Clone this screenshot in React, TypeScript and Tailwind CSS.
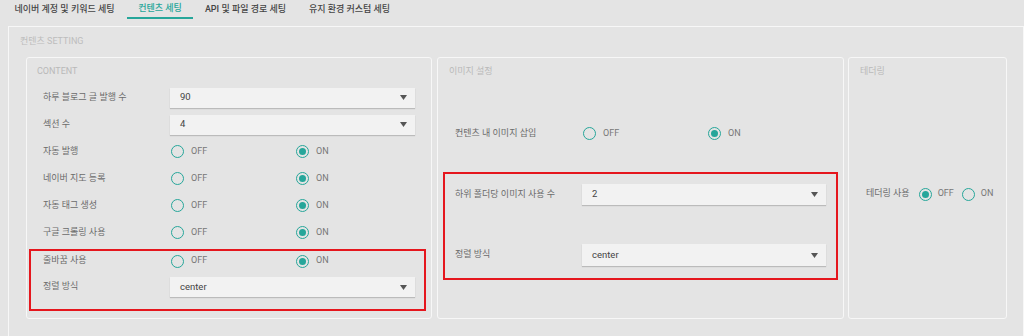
import React from 'react';

const tabs = [
  { label: '네이버 계정 및 키워드 세팅', width: 'w-[125px]' },
  { label: '컨텐츠 세팅', width: 'w-[66px]', active: true },
  { label: 'API 및 파일 경로 세팅', width: 'w-[105px]' },
  { label: '유지 환경 커스텀 세팅', width: 'w-[103px]' },
];

const Radio = ({ checked }: { checked?: boolean }) => (
  <span className="w-[13px] h-[13px] rounded-full border-[1.5px] border-[#26a69a] flex items-center justify-center shrink-0">
    {checked && <span className="w-[7px] h-[7px] rounded-full bg-[#26a69a]" />}
  </span>
);

const Select = ({ value, height = 'h-[20px]' }: { value: string; height?: string }) => (
  <div
    className={`flex-1 ${height} bg-[#f2f2f2] flex items-center justify-between pl-[10px] pr-[8px] shadow-[0_1px_1px_rgba(0,0,0,0.18)] text-[9.5px] text-[#444]`}
  >
    <span>{value}</span>
    <svg width="7" height="5" viewBox="0 0 7 5">
      <path d="M0 0 H7 L3.5 5 Z" fill="#555" />
    </svg>
  </div>
);

const OnOff = ({ on }: { on: boolean }) => (
  <div className="flex-1 flex items-center">
    <div className="w-[126px] flex items-center gap-[7px] pl-[1px]">
      <Radio checked={!on} />
      <span className="text-[9px] text-[#777]">OFF</span>
    </div>
    <div className="flex items-center gap-[7px]">
      <Radio checked={on} />
      <span className="text-[9px] text-[#777]">ON</span>
    </div>
  </div>
);

const Row = ({ label, children, h = 'h-[27px]', className = '' }: { label: string; children: React.ReactNode; h?: string; className?: string }) => (
  <div className={`flex items-center ${h} ${className}`}>
    <div className="w-[127px] shrink-0 text-[9px] text-[#6b6b6b] whitespace-nowrap">{label}</div>
    {children}
  </div>
);

const PanelTitle = ({ children }: { children: React.ReactNode }) => (
  <div className="h-[12px] leading-[12px] text-[9px] text-[#b9b9b9] -ml-[6px]">{children}</div>
);

export default function App() {
  return (
    <div className="w-[1024px] h-[336px] overflow-hidden bg-[#e4e4e4] font-['Roboto','Noto_Sans_CJK_KR',sans-serif]">
      {/* tabs */}
      <div className="flex pl-[2px] h-[19px]">
        {tabs.map((t) => (
          <div
            key={t.label}
            className={`${t.width} h-[19px] flex items-center justify-center text-[9px] font-medium whitespace-nowrap ${
              t.active ? 'text-[#26a69a] border-b-[2px] border-[#26a69a]' : 'text-[#444]'
            }`}
          >
            {t.label}
          </div>
        ))}
      </div>

      {/* outer card */}
      <div className="mt-[7px] ml-[8px] h-[340px] border border-[#f7f7f7] pl-[11px]">
        <div className="h-[12px] mt-[8px] leading-[12px] text-[9px] text-[#bdbdbd]">컨텐츠 SETTING</div>
        <div className="flex mt-[10px] pl-[6px]">
          {/* CONTENT */}
          <div className="w-[406px] h-[262px] border border-[#f7f7f7] rounded-[3px] pt-[7px] px-[16px]">
            <PanelTitle>CONTENT</PanelTitle>
            <div className="mt-[7px]">
              <Row label="하루 블로그 글 발행 수">
                <Select value="90" />
              </Row>
              <Row label="섹션 수">
                <Select value="4" />
              </Row>
              <Row label="자동 발행">
                <OnOff on />
              </Row>
              <Row label="네이버 지도 등록">
                <OnOff on />
              </Row>
              <Row label="자동 태그 생성">
                <OnOff on />
              </Row>
              <Row label="구글 크롤링 사용">
                <OnOff on />
              </Row>
              <div className="mt-[3px] -ml-[14px] -mr-[11px] pl-[12px] pr-[9px] pb-[12px] border-2 border-[#e5161d]">
                <Row label="줄바꿈 사용" h="h-[20px]">
                  <OnOff on />
                </Row>
                <Row label="정렬 방식" h="h-[20px]" className="mt-[6px]">
                  <Select value="center" />
                </Row>
              </div>
            </div>
          </div>

          {/* 이미지 설정 */}
          <div className="ml-[5px] w-[407px] h-[262px] border border-[#f7f7f7] rounded-[3px] pt-[7px] px-[17px]">
            <PanelTitle>이미지 설정</PanelTitle>
            <Row label="컨텐츠 내 이미지 삽입" className="mt-[43px]">
              <OnOff on />
            </Row>
            <div className="mt-[25px] -mx-[12px] px-[10px] pt-[10px] pb-[12px] border-2 border-[#e5161d]">
              <Row label="하위 폴더당 이미지 사용 수" h="h-[21px]">
                <Select value="2" height="h-[21px]" />
              </Row>
              <Row label="정렬 방식" h="h-[22px]" className="mt-[39px]">
                <Select value="center" height="h-[22px]" />
              </Row>
            </div>
          </div>

          {/* 테더링 */}
          <div className="ml-[4px] w-[159px] h-[262px] border border-[#f7f7f7] rounded-[3px] pt-[7px] px-[17px]">
            <PanelTitle>테더링</PanelTitle>
            <div className="mt-[107px] h-[20px] flex items-center text-[9px] whitespace-nowrap">
              <span className="text-[#6b6b6b]">테더링 사용</span>
              <span className="ml-[9px]">
                <Radio checked />
              </span>
              <span className="ml-[6px] text-[#777]">OFF</span>
              <span className="ml-[8px]">
                <Radio />
              </span>
              <span className="ml-[6px] text-[#777]">ON</span>
            </div>
          </div>
        </div>
      </div>
    </div>
  );
}
